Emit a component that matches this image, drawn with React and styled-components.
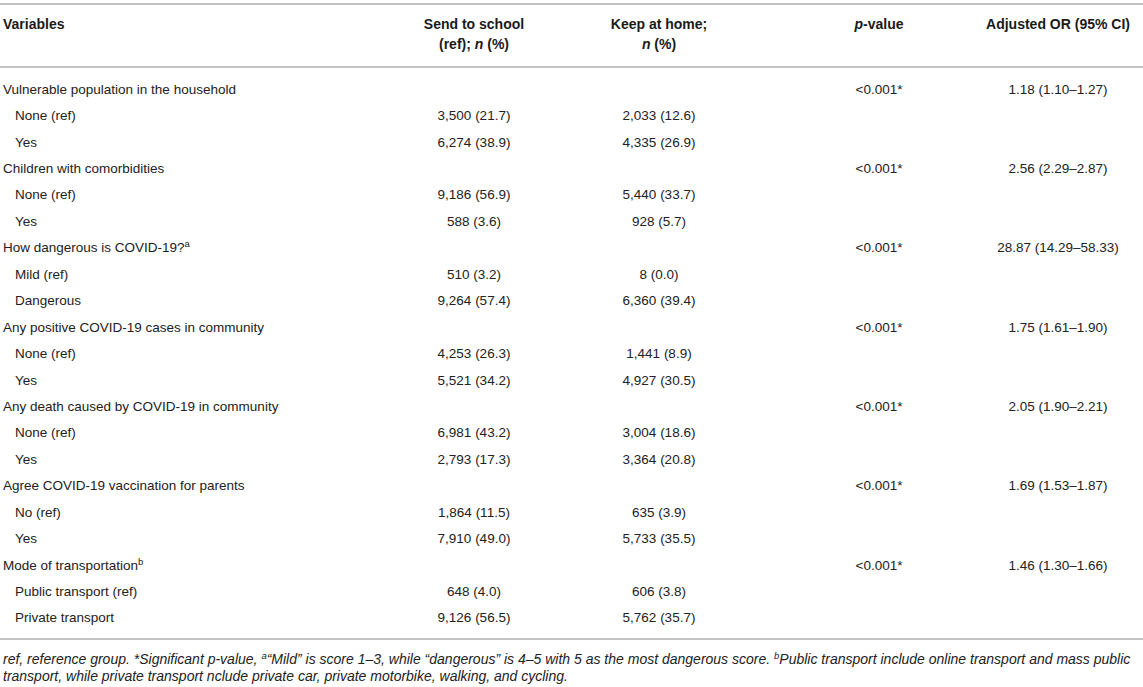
import React from "react";
import styled, { createGlobalStyle } from "styled-components";

const GlobalStyle = createGlobalStyle`
  body {
    margin: 0;
    background: #ffffff;
    font-family: "Liberation Sans", Arial, sans-serif;
    color: #222222;
  }
`;

const COLS = "412px 124px 246px 194px 164px";

const TableWrap = styled.div`
  width: 1143px;
  padding-top: 3px;
`;
const Rule = styled.div`
  height: 2px;
  background-color: #c2c2c2;
`;
const HeadRow = styled.div`
  display: grid;
  grid-template-columns: ${COLS};
  padding: 9px 0 12px 0;
  font-weight: bold;
  font-size: 14px;
  line-height: 20px;
  color: #1a1a1a;
`;
const HeadCell = styled.div`
  text-align: ${(p) => (p.$left ? "left" : "center")};
  padding-left: ${(p) => (p.$left ? "3px" : "0")};
  white-space: nowrap;
`;
const Body = styled.div`
  padding: 8px 0 7px 0;
`;
const Row = styled.div`
  display: grid;
  grid-template-columns: ${COLS};
  height: 26.45px;
  align-items: center;
  font-size: 13.5px;
  color: #222222;
`;
const LabelCell = styled.div`
  padding-left: ${(p) => (p.$sub ? "15px" : "3px")};
  white-space: nowrap;
`;
const NumCell = styled.div`
  text-align: center;
  white-space: nowrap;
`;
const Sup = styled.sup`
  font-size: 9.5px;
  line-height: 0;
  vertical-align: 5px;
`;
const Footnote = styled.p`
  margin: 0;
  padding: 11px 0 0 3px;
  font-size: 14px;
  font-style: italic;
  line-height: 17px;
  color: #222222;
  white-space: nowrap;
`;

const groups = [
  {
    label: "Vulnerable population in the household",
    p: "<0.001*",
    or: "1.18 (1.10–1.27)",
    rows: [
      ["None (ref)", "3,500 (21.7)", "2,033 (12.6)"],
      ["Yes", "6,274 (38.9)", "4,335 (26.9)"],
    ],
  },
  {
    label: "Children with comorbidities",
    p: "<0.001*",
    or: "2.56 (2.29–2.87)",
    rows: [
      ["None (ref)", "9,186 (56.9)", "5,440 (33.7)"],
      ["Yes", "588 (3.6)", "928 (5.7)"],
    ],
  },
  {
    label: "How dangerous is COVID-19?",
    sup: "a",
    p: "<0.001*",
    or: "28.87 (14.29–58.33)",
    rows: [
      ["Mild (ref)", "510 (3.2)", "8 (0.0)"],
      ["Dangerous", "9,264 (57.4)", "6,360 (39.4)"],
    ],
  },
  {
    label: "Any positive COVID-19 cases in community",
    p: "<0.001*",
    or: "1.75 (1.61–1.90)",
    rows: [
      ["None (ref)", "4,253 (26.3)", "1,441 (8.9)"],
      ["Yes", "5,521 (34.2)", "4,927 (30.5)"],
    ],
  },
  {
    label: "Any death caused by COVID-19 in community",
    p: "<0.001*",
    or: "2.05 (1.90–2.21)",
    rows: [
      ["None (ref)", "6,981 (43.2)", "3,004 (18.6)"],
      ["Yes", "2,793 (17.3)", "3,364 (20.8)"],
    ],
  },
  {
    label: "Agree COVID-19 vaccination for parents",
    p: "<0.001*",
    or: "1.69 (1.53–1.87)",
    rows: [
      ["No (ref)", "1,864 (11.5)", "635 (3.9)"],
      ["Yes", "7,910 (49.0)", "5,733 (35.5)"],
    ],
  },
  {
    label: "Mode of transportation",
    sup: "b",
    p: "<0.001*",
    or: "1.46 (1.30–1.66)",
    rows: [
      ["Public transport (ref)", "648 (4.0)", "606 (3.8)"],
      ["Private transport", "9,126 (56.5)", "5,762 (35.7)"],
    ],
  },
];

export default function App() {
  return (
    <>
      <GlobalStyle />
      <TableWrap>
        <Rule />
        <HeadRow>
          <HeadCell $left>Variables</HeadCell>
          <HeadCell>
            Send to school
            <br />
            (ref); <i>n</i> (%)
          </HeadCell>
          <HeadCell>
            Keep at home;
            <br />
            <i>n</i> (%)
          </HeadCell>
          <HeadCell>
            <i>p</i>-value
          </HeadCell>
          <HeadCell>Adjusted OR (95% CI)</HeadCell>
        </HeadRow>
        <Rule />
        <Body>
          {groups.map((g) => (
            <React.Fragment key={g.label}>
              <Row>
                <LabelCell>
                  {g.label}
                  {g.sup && <Sup>{g.sup}</Sup>}
                </LabelCell>
                <NumCell />
                <NumCell />
                <NumCell>{g.p}</NumCell>
                <NumCell>{g.or}</NumCell>
              </Row>
              {g.rows.map((r, i) => (
                <Row key={i}>
                  <LabelCell $sub>{r[0]}</LabelCell>
                  <NumCell>{r[1]}</NumCell>
                  <NumCell>{r[2]}</NumCell>
                  <NumCell />
                  <NumCell />
                </Row>
              ))}
            </React.Fragment>
          ))}
        </Body>
        <Rule />
        <Footnote>
          ref, reference group. *Significant p-value, <Sup>a</Sup>“Mild” is
          score 1–3, while “dangerous” is 4–5 with 5 as the most dangerous
          score. <Sup>b</Sup>Public transport include online transport and mass
          public
          <br />
          transport, while private transport nclude private car, private
          motorbike, walking, and cycling.
        </Footnote>
      </TableWrap>
    </>
  );
}
